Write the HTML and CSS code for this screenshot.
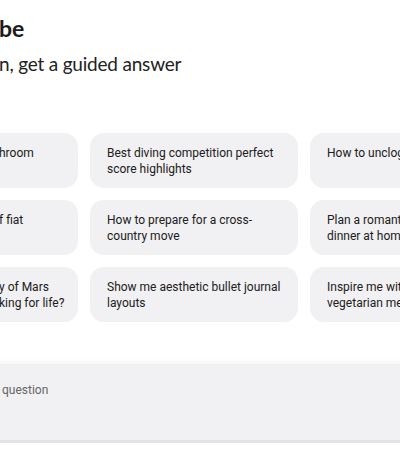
FILE: index.html
```html
<!DOCTYPE html>
<html lang="en">
<head>
<meta charset="utf-8">
<title>Guided answers</title>
<link rel="stylesheet" href="styles.css">
</head>
<body>
<main class="page">
  <header class="hero">
    <h1 class="title">be</h1>
    <p class="subtitle">n, get a guided answer</p>
  </header>
  <section class="grid">
    <div class="card cut">hroom</div>
    <div class="card">Best diving competition perfect score highlights</div>
    <div class="card">How to unclog a bathroom sink</div>
    <div class="card cut">f fiat</div>
    <div class="card">How to prepare for a cross-country move</div>
    <div class="card">Plan a romantic<br>dinner at home</div>
    <div class="card cut">y of Mars<br>king for life?</div>
    <div class="card">Show me aesthetic bullet journal layouts</div>
    <div class="card">Inspire me with<br>vegetarian meals</div>
  </section>
  <div class="composer">
    <span class="placeholder">question</span>
  </div>
</main>
</body>
</html>
```
FILE: styles.css
```css
html, body {
  margin: 0;
  padding: 0;
  background: #ffffff;
  overflow: hidden;
}
.page {
  width: 400px;
  height: 450px;
  overflow: hidden;
  font-family: Roboto, "Liberation Sans", sans-serif;
}
.hero {
  padding-top: 13px;
  color: #1b1b1b;
  font-family: Lato, "Noto Sans", sans-serif;
}
.title {
  margin: 0 0 0 -1px;
  font-size: 23px;
  line-height: 30px;
  font-weight: 700;
}
.subtitle {
  margin: 8px 0 0 -1px;
  font-size: 19px;
  line-height: 26px;
  font-weight: 400;
  letter-spacing: -0.2px;
  color: #222;
}
.grid {
  margin-top: 56px;
  margin-left: -130px;
  display: grid;
  grid-template-columns: repeat(3, 208px);
  grid-auto-rows: 55px;
  column-gap: 12px;
  row-gap: 12px;
}
.card {
  box-sizing: border-box;
  background: #f1f0f2;
  border-radius: 14px;
  padding: 12px 17px;
  font-size: 12px;
  line-height: 16px;
  color: #202020;
  overflow: hidden;
}
.card.cut {
  padding-left: 129px;
  padding-right: 0;
  white-space: nowrap;
}
.composer {
  margin-top: 42px;
  margin-left: -20px;
  width: 440px;
  height: 79px;
  background: #f1f0f2;
  border-bottom: 3px solid #e3e2e4;
  box-shadow: 0 -3px 6px rgba(0, 0, 0, 0.035);
  padding: 15px 0 0 22px;
  box-sizing: border-box;
}
.placeholder {
  font-size: 12px;
  line-height: 16px;
  color: #666666;
}
```
